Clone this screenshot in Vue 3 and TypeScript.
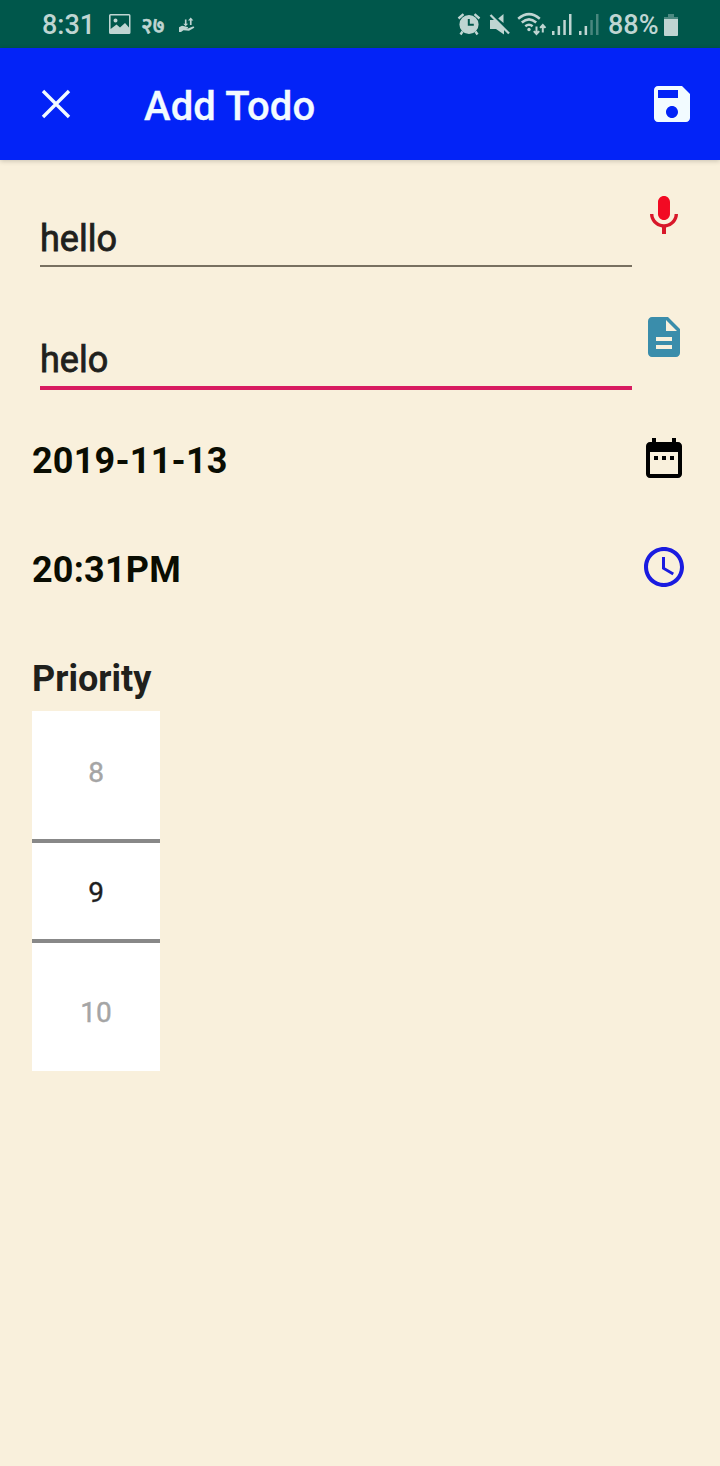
<script setup lang="ts">
import { ref } from 'vue'

const title = ref<string>('hello')
const description = ref<string>('helo')
const date = ref<string>('2019-11-13')
const time = ref<string>('20:31PM')
const priorities: number[] = [8, 9, 10]
const selected = ref<number>(9)
</script>

<template>
  <div class="screen">
    <div class="status">
      <span class="clock">8:31</span>
      <svg class="s-image" width="22" height="20" viewBox="0 0 22 20">
        <path fill-rule="evenodd" d="M1.5 0H20a1.5 1.5 0 0 1 1.5 1.5v17A1.5 1.5 0 0 1 20 20H1.5A1.5 1.5 0 0 1 0 18.500V1.500A1.500 1.500 0 0 1 1.500 0zM1.600 1.600v13.400L7.500 10.500l3.500 3 5-4.500 4 4.500V1.600zM6.500 4.500a2 2 0 1 1 0 4 2 2 0 0 1 0-4z" />
      </svg>
      <span class="deva">२७</span>
      <svg class="s-hand" width="16" height="16" viewBox="0 0 16 16">
        <path d="M5.900 2.500h1.600v4.200h1.700L6.700 9.300 4.200 6.700h1.700zM11.700.5l2.700 3h-1.800v4.500h-1.700V3.500H9zM0 10.200l3-1.500 3.500.9 2 .3c1 .2.800 1.200-.3 1.300H6.500l2.500.4 5-2.100c1.300-.3 1.700.7.800 1.400L10 13.800l-5.500-.6L2 15H0z" />
      </svg>
      <span class="grow"></span>
      <svg class="s-alarm" width="24" height="24" viewBox="0 0 24 24">
        <path d="M1.500 6.500L6.500 2.200M22.500 6.500L17.500 2.200M5.500 19.500l-2 3M18.500 19.500l2 3" fill="none" stroke="currentColor" stroke-width="2.400" />
        <path fill-rule="evenodd" d="M12 2.900a9.600 9.600 0 1 1 0 19.200 9.600 9.600 0 0 1 0-19.200zM10.800 7v6.800h6v-2h-4V7z" />
      </svg>
      <svg class="s-mute" width="22" height="22" viewBox="0 0 22 22">
        <path d="M1 7h5l9 9v5.500L7 16H1zM14.500 1v9L9.200 5.500z" />
        <path d="M1.500 2L20 20.500" fill="none" stroke="currentColor" stroke-width="2.300" />
      </svg>
      <svg class="s-wifi" width="30" height="24" viewBox="0 0 30 24">
        <g fill="none" stroke="currentColor" stroke-width="2.500">
          <path d="M1.200 6.700Q12 -2.500 22.800 6.700" />
          <path d="M4.800 10.500Q12 4.200 19.200 10.500" />
          <path d="M8.300 14.300Q12 11.200 15.600 14.300" />
          <path d="M19.500 14.500v7M16.800 19.100l2.700 2.900 2.700-2.900M25.800 20.500v-7M23.100 15.900l2.700-2.900 2.700 2.900" stroke-width="2" />
        </g>
        <circle cx="12" cy="17.500" r="1.700" />
      </svg>
      <svg class="s-bars" width="20" height="21" viewBox="0 0 20 21">
        <path d="M0 17h2.500v4H0zM5.600 12h2.500v9H5.600zM11.300 6h2.500v15h-2.500zM17 0h2.500v21H17z" />
      </svg>
      <svg class="s-bars second" width="20" height="21" viewBox="0 0 20 21">
        <path d="M0 17h2.500v4H0zM5.600 12h2.500v9H5.600z" />
        <path opacity=".38" d="M11.300 6h2.500v15h-2.500zM17 0h2.500v21H17z" />
      </svg>
      <span class="percent">88%</span>
      <svg class="s-batt" width="14" height="22" viewBox="0 0 14 22">
        <path opacity=".4" d="M4 0h6v3h4v2H0V3h4z" />
        <path d="M0 5h14v16a1 1 0 0 1-1 1H1a1 1 0 0 1-1-1z" />
      </svg>
    </div>

    <header class="bar">
      <svg class="icon close" viewBox="0 0 24 24"><path d="M5.500 5.500l13 13M18.500 5.500l-13 13" fill="none" stroke="currentColor" stroke-width="1.700" /></svg>
      <h1>Add Todo</h1>
      <svg class="icon save" viewBox="0 0 24 24"><path d="M17 3H5c-1.110 0-2 .9-2 2v14c0 1.100.89 2 2 2h14c1.100 0 2-.9 2-2V7l-4-4zm-5 16c-1.660 0-3-1.340-3-3s1.340-3 3-3 3 1.340 3 3-1.340 3-3 3zm3-10H5V5h10v4z" /></svg>
    </header>

    <main>
      <div class="row first">
        <div class="field">{{ title }}</div>
        <svg class="icon mic" viewBox="0 0 24 24"><path fill="#f20a23" d="M12 14c1.660 0 2.990-1.340 2.990-3L15 5c0-1.660-1.340-3-3-3S9 3.340 9 5v6c0 1.660 1.340 3 3 3z" /><path d="M17.300 11c0 3-2.540 5.100-5.300 5.100S6.700 14 6.700 11H5c0 3.410 2.720 6.230 6 6.720V21h2v-3.280c3.280-.48 6-3.300 6-6.720h-1.700z" /></svg>
      </div>
      <div class="row second-row">
        <div class="field focused">{{ description }}</div>
        <svg class="icon doc" viewBox="0 0 24 24"><path d="M14 2H6c-1.100 0-1.990.9-1.990 2L4 20c0 1.100.89 2 1.990 2H18c1.100 0 2-.9 2-2V8l-6-6zm2 16H8v-2h8v2zm0-4H8v-2h8v2zm-3-5V3.500L18.500 9H13z" /></svg>
      </div>
      <div class="row date-row">
        <div class="value">{{ date }}</div>
        <svg class="icon cal" viewBox="0 0 24 24"><path d="M9 11H7v2h2v-2zm4 0h-2v2h2v-2zm4 0h-2v2h2v-2zm2-7h-1V2h-2v2H8V2H6v2H5c-1.110 0-1.990.9-1.990 2L3 20c0 1.100.89 2 2 2h14c1.100 0 2-.9 2-2V6c0-1.100-.9-2-2-2zm0 16H5V9h14v11z" /></svg>
      </div>
      <div class="row time-row">
        <div class="value">{{ time }}</div>
        <svg class="icon time" viewBox="0 0 24 24"><path d="M11.990 2C6.470 2 2 6.480 2 12s4.470 10 9.990 10C17.520 22 22 17.520 22 12S17.520 2 11.990 2zM12 20c-4.420 0-8-3.580-8-8s3.580-8 8-8 8 3.580 8 8-3.580 8-8 8z" /><path d="M12.500 7H11v6l5.250 3.150.75-1.230-4.500-2.670z" /></svg>
      </div>
      <h2>Priority</h2>
      <div class="picker">
        <div v-for="p in priorities" :key="p" class="item" :class="{ on: p === selected }">
          {{ p }}
        </div>
        <div class="window"></div>
      </div>
    </main>
  </div>
</template>

<style scoped>
.screen {
  width: 720px;
  height: 1466px;
  overflow: hidden;
  background: #f9f0dc;
  font-family: Roboto, "Noto Sans", sans-serif;
  color: #20201c;
}
svg {
  display: block;
  flex: none;
  fill: currentColor;
}
.status {
  display: flex;
  align-items: center;
  box-sizing: border-box;
  height: 48px;
  padding: 0 42px;
  background: #00574b;
  color: #bfd5d2;
  font-size: 27px;
  line-height: 46px;
  font-weight: 500;
}
.clock { width: 67px; padding-top: 2px; white-space: nowrap; }
.s-image { margin-top: 0; }
.deva {
  width: 26px;
  margin-left: 10px;
  font-size: 22px;
  font-family: "Noto Sans", Roboto, sans-serif;
  -webkit-text-stroke: 0.6px currentColor;
}
.s-hand { margin-left: 12px; margin-top: 1px; }
.grow { flex: 1; }
.s-alarm { margin-right: 8px; }
.s-mute { margin-right: 6px; }
.s-wifi { margin-right: 5px; }
.s-bars { margin-right: 7px; margin-top: 1px; }
.s-bars.second { margin-right: 9px; }
.percent { width: 50px; margin-right: 6px; padding-top: 2px; white-space: nowrap; }
.s-batt { margin-top: 1px; }
.icon { width: 48px; height: 48px; }
.bar {
  position: relative;
  display: flex;
  align-items: center;
  box-sizing: border-box;
  height: 112px;
  padding: 0 24px 0 32px;
  background: #0323f7;
  color: #f2fbff;
  box-shadow: 0 1px 5px rgba(0, 0, 0, 0.2);
}
h1 {
  flex: 1;
  margin: 0;
  padding: 6px 0 0 64px;
  font-size: 40px;
  line-height: 48px;
  font-weight: 500;
  letter-spacing: 0.15px;
  -webkit-text-stroke: 0.3px currentColor;
}
main { padding: 32px 32px 0; }
.row { display: flex; align-items: flex-start; }
.first { height: 75px; }
.second-row { height: 77px; margin-top: 46px; }
.date-row { height: 48px; margin-top: 44px; }
.time-row { height: 48px; margin-top: 61px; }
.field {
  flex: 1;
  margin: 0 8px;
  padding: 26px 0 5px;
  border-bottom: 2px solid #787060;
  font-size: 36px;
  line-height: 42px;
  -webkit-text-stroke: 0.8px currentColor;
}
.field.focused { border-bottom: 4px solid #d81b60; }
.value {
  flex: 1;
  padding-top: 6px;
  color: #0a0d02;
  font-size: 36px;
  line-height: 42px;
  font-weight: 700;
  letter-spacing: 0.2px;
}
.mic { color: #d8182a; }
.doc { color: #3a8dab; }
.cal { color: #000; }
.time { color: #1a1be0; }
h2 {
  margin: 67px 0 11px;
  font-size: 36px;
  line-height: 42px;
  font-weight: 700;
}
.picker {
  position: relative;
  width: 128px;
  height: 360px;
  background: #fff;
}
.item {
  box-sizing: border-box;
  height: 120px;
  padding-top: 2px;
  text-align: center;
  font-size: 28px;
  line-height: 120px;
  color: #a5a5a5;
  -webkit-text-stroke: 0.4px currentColor;
}
.item.on { color: #1f1f1f; }
.window {
  position: absolute;
  left: 0;
  top: 128px;
  box-sizing: border-box;
  width: 128px;
  height: 104px;
  border: solid #888;
  border-width: 4px 0;
}
</style>
